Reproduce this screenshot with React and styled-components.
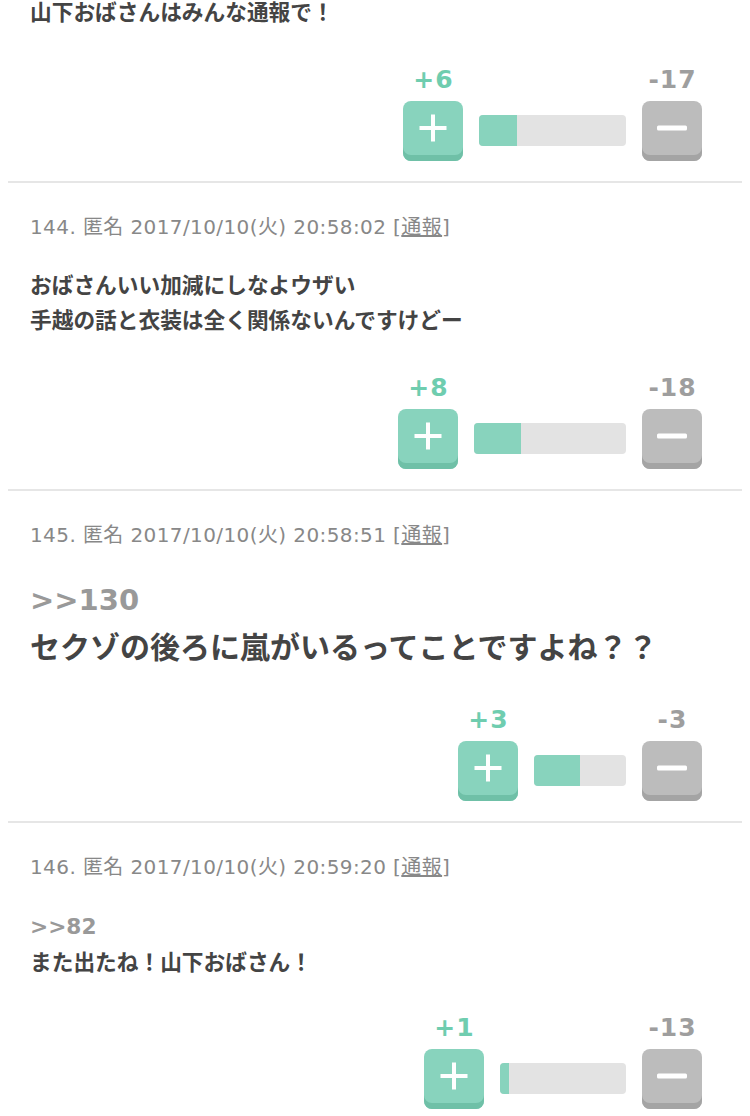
import React from "react";
import styled, { createGlobalStyle } from "styled-components";

const GlobalStyle = createGlobalStyle`
  body {
    margin: 0 8px;
    background: #fff;
    font-family: "DejaVu Sans", "Noto Sans CJK JP", sans-serif;
  }
`;

const Page = styled.div`
  margin-top: -5px;
`;

const Item = styled.div`
  padding: ${(props) => (props.first ? "0" : "30px")} 40px 20px 22px;
  border-bottom: 2px solid #e6e6e6;
`;

const Meta = styled.div`
  font-size: 20px;
  line-height: 28px;
  letter-spacing: 0.4px;
  color: #888;
  a {
    color: #888;
    text-decoration: underline;
  }
`;

const Body = styled.div`
  margin-top: ${(props) => (props.first ? "0" : "27px")};
  font-size: ${(props) => (props.big ? "30px" : "21.7px")};
  line-height: ${(props) => (props.big ? "48px" : "35px")};
  font-weight: bold;
  color: #444;
`;

const Anchor = styled.div`
  color: #999;
  font-size: ${(props) => (props.big ? "29px" : "inherit")};
  line-height: ${(props) => (props.big ? "48px" : "37px")};
`;

const Vote = styled.div`
  margin-top: ${(props) => (props.big ? "36px" : "38px")};
  display: flex;
  justify-content: flex-end;
  align-items: flex-end;
  gap: 16px;
`;

const VoteCol = styled.div`
  display: flex;
  flex-direction: column;
  align-items: center;
  width: 60px;
`;

const Count = styled.div`
  font-size: 25px;
  line-height: 24px;
  font-weight: bold;
  letter-spacing: 1px;
  padding-left: 1px;
  margin-bottom: 9px;
  white-space: nowrap;
  color: ${(props) => (props.up ? "#6fcdaf" : "#9e9e9e")};
`;

const Button = styled.div`
  width: 60px;
  height: 60px;
  box-sizing: border-box;
  padding-bottom: 6px;
  border-radius: 8px;
  display: flex;
  align-items: center;
  justify-content: center;
  background: ${(props) => (props.up ? "#88d3bd" : "#bcbcbc")};
  box-shadow: inset 0 -6px 0 ${(props) => (props.up ? "#6fc0a7" : "#a4a4a4")};
`;

const Bar = styled.div`
  height: 31px;
  margin-bottom: 15px;
  border-radius: 4px;
  background: #e3e3e3;
  overflow: hidden;
`;

const Fill = styled.div`
  height: 100%;
  background: #88d3bd;
`;

const PlusIcon = () => (
  <svg width="30" height="30" viewBox="0 0 30 30">
    <path d="M15 1.5V28.5M1.5 15H28.5" stroke="#fff" strokeWidth="4" />
  </svg>
);

const MinusIcon = () => (
  <svg width="30" height="6" viewBox="0 0 30 6">
    <rect x="0" y="0.5" width="30" height="5" rx="1.5" fill="#fff" />
  </svg>
);

const posts = [
  {
    first: true,
    lines: ["山下おばさんはみんな通報で！"],
    plus: 6,
    minus: 17,
    bar: 147,
  },
  {
    no: 144,
    date: "2017/10/10(火) 20:58:02",
    lines: ["おばさんいい加減にしなよウザい", "手越の話と衣装は全く関係ないんですけどー"],
    plus: 8,
    minus: 18,
    bar: 152,
  },
  {
    no: 145,
    date: "2017/10/10(火) 20:58:51",
    anchor: ">>130",
    big: true,
    lines: ["セクゾの後ろに嵐がいるってことですよね？？"],
    plus: 3,
    minus: 3,
    bar: 92,
  },
  {
    no: 146,
    date: "2017/10/10(火) 20:59:20",
    anchor: ">>82",
    lines: ["また出たね！山下おばさん！"],
    plus: 1,
    minus: 13,
    bar: 126,
  },
];

function Post({ post }) {
  const ratio = (post.plus / (post.plus + post.minus)) * 100;
  return (
    <Item first={post.first}>
      {post.no && (
        <Meta>
          {post.no}. 匿名 {post.date} [<a>通報</a>]
        </Meta>
      )}
      <Body first={post.first} big={post.big}>
        {post.anchor && <Anchor big={post.big}>{post.anchor}</Anchor>}
        {post.lines.map((line) => (
          <div key={line}>{line}</div>
        ))}
      </Body>
      <Vote big={post.big || post.anchor}>
        <VoteCol>
          <Count up>+{post.plus}</Count>
          <Button up>
            <PlusIcon />
          </Button>
        </VoteCol>
        <Bar style={{ width: post.bar }}>
          <Fill style={{ width: `${ratio}%` }} />
        </Bar>
        <VoteCol>
          <Count>-{post.minus}</Count>
          <Button>
            <MinusIcon />
          </Button>
        </VoteCol>
      </Vote>
    </Item>
  );
}

export default function App() {
  return (
    <>
      <GlobalStyle />
      <Page>
        {posts.map((post, i) => (
          <Post key={i} post={post} />
        ))}
      </Page>
    </>
  );
}
